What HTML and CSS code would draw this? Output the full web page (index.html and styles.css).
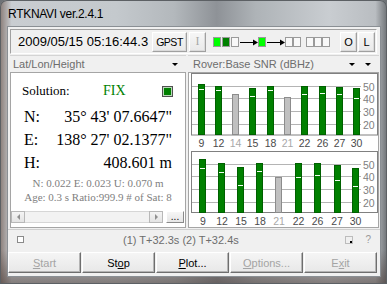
FILE: index.html
```html
<!DOCTYPE html>
<html lang="en">
<head>
    <meta charset="UTF-8">
    <title>RTKNAVI ver.2.4.1</title>
    <link rel="stylesheet" href="styles.css">
</head>
<body>

    <div class="window">
        <div class="titlebar">RTKNAVI ver.2.4.1</div>

        <div class="client">
            <!-- time and stream status -->
            <div class="topbar">
                <div class="time">2009/05/15 05:16:44.3</div>
                <button class="tbtn gpst">GPST</button>
                <button class="tbtn ibtn">I</button>
                <svg class="streams" width="118" height="12" viewBox="0 0 118 12">
                    <rect x="0.5" y="1.5" width="7" height="9" fill="#00ff00" stroke="#9a9a9a"/>
                    <rect x="9.5" y="1.5" width="7" height="9" fill="#008000" stroke="#9a9a9a"/>
                    <rect x="18.5" y="1.5" width="7" height="9" fill="#f8f8f8" stroke="#9a9a9a"/>
                    <line x1="27" y1="6.5" x2="41" y2="6.5" stroke="#000"/>
                    <polygon points="40,3.5 45,6.5 40,9.5" fill="#000"/>
                    <rect x="45.5" y="1.5" width="7" height="9" fill="#00ff00" stroke="#9a9a9a"/>
                    <line x1="54" y1="6.5" x2="68" y2="6.5" stroke="#000"/>
                    <polygon points="67,3.5 72,6.5 67,9.5" fill="#000"/>
                    <rect x="72.5" y="1.5" width="7" height="9" fill="#f8f8f8" stroke="#9a9a9a"/>
                    <rect x="80.5" y="1.5" width="7" height="9" fill="#f8f8f8" stroke="#9a9a9a"/>
                    <rect x="93.5" y="1.5" width="7" height="9" fill="#f8f8f8" stroke="#9a9a9a"/>
                    <rect x="101.5" y="1.5" width="7" height="9" fill="#f8f8f8" stroke="#9a9a9a"/>
                    <rect x="109.5" y="1.5" width="7" height="9" fill="#f8f8f8" stroke="#9a9a9a"/>
                </svg>
                <button class="tbtn obtn">O</button>
                <button class="tbtn lbtn">L</button>
            </div>

            <div class="main">
                <!-- solution panel -->
                <div class="pane pane-left">
                    <div class="pane-head">
                        <span>Lat/Lon/Height</span>
                        <span class="drop"></span>
                    </div>
                    <div class="box sol-box">
                        <div class="sol-row">
                            <span class="sol-label">Solution:</span>
                            <span class="sol-fix">FIX</span>
                            <span class="sol-led"></span>
                        </div>
                        <div class="pos-row"><span>N:</span><span>35° 43' 07.6647"</span></div>
                        <div class="pos-row"><span>E:</span><span>138° 27' 02.1377"</span></div>
                        <div class="pos-row"><span>H:</span><span>408.601 m</span></div>
                        <div class="sub-line">N: 0.022 E: 0.023 U: 0.070 m</div>
                        <div class="sub-line">Age: 0.3 s Ratio:999.9 # of Sat: 8</div>
                        <div class="scroll-row">
                            <div class="scrollbar">
                                <span class="sb-btn"><span class="tri-left"></span></span>
                                <span class="sb-track"></span>
                                <span class="sb-btn"><span class="tri-right"></span></span>
                            </div>
                            <button class="more-btn">...</button>
                        </div>
                    </div>
                </div>

                <!-- snr panel -->
                <div class="pane pane-right">
                    <div class="pane-head">
                        <span>Rover:Base SNR (dBHz)</span>
                        <span class="drop"></span>
                        <span class="drop drop-last"></span>
                    </div>
                    <div class="box snr-box">
                        <svg class="snr" width="189" height="154" viewBox="189 73 189 154">
                            <!-- rover -->
                            <rect x="191.5" y="73.5" width="186" height="61.5" fill="#fff" stroke="#808080"/>
                            <g stroke="#b4b4b4">
                                <line x1="192" y1="86.5" x2="361" y2="86.5"/>
                                <line x1="192" y1="98.5" x2="361" y2="98.5"/>
                                <line x1="192" y1="111.5" x2="361" y2="111.5"/>
                                <line x1="192" y1="124.5" x2="361" y2="124.5"/>
                            </g>
                            <g class="axis">
                                <text x="363" y="90.5">50</text>
                                <text x="363" y="102.5">40</text>
                                <text x="363" y="115.5">30</text>
                                <text x="363" y="128.5">20</text>
                            </g>
                            <g fill="#008000" stroke="#006000">
                                <rect x="198.5" y="84.5" width="6" height="50"/>
                                <rect x="215.5" y="86.5" width="6" height="48"/>
                                <rect x="249.5" y="88.5" width="6" height="46"/>
                                <rect x="267.5" y="86.5" width="6" height="48"/>
                                <rect x="301.5" y="86.5" width="6" height="48"/>
                                <rect x="319.5" y="86.5" width="6" height="48"/>
                                <rect x="336.5" y="87.5" width="6" height="47"/>
                                <rect x="353.5" y="88.5" width="6" height="46"/>
                            </g>
                            <g fill="#c0c0c0" stroke="#8c8c8c">
                                <rect x="232.5" y="94.5" width="6" height="40"/>
                                <rect x="284.5" y="97.5" width="6" height="37"/>
                            </g>
                            <g stroke="#f4fff4">
                                <line x1="199" y1="89.5" x2="204" y2="89.5"/>
                                <line x1="216" y1="90.5" x2="221" y2="90.5"/>
                                <line x1="250" y1="96.5" x2="255" y2="96.5"/>
                                <line x1="268" y1="90.5" x2="273" y2="90.5"/>
                                <line x1="302" y1="94.5" x2="307" y2="94.5"/>
                                <line x1="320" y1="93.5" x2="325" y2="93.5"/>
                                <line x1="337" y1="94.5" x2="342" y2="94.5"/>
                                <line x1="354" y1="98.5" x2="359" y2="98.5"/>
                            </g>
                            <g class="prn">
                                <text x="201.5" y="146.5">9</text>
                                <text x="218.5" y="146.5">12</text>
                                <text x="235.5" y="146.5" class="off">14</text>
                                <text x="252.5" y="146.5">15</text>
                                <text x="270.5" y="146.5">18</text>
                                <text x="287.5" y="146.5" class="off">21</text>
                                <text x="304.5" y="146.5">22</text>
                                <text x="322.5" y="146.5">26</text>
                                <text x="339.5" y="146.5">27</text>
                                <text x="356.5" y="146.5">30</text>
                            </g>

                            <!-- base -->
                            <rect x="191.5" y="151.5" width="186" height="61" fill="#fff" stroke="#808080"/>
                            <g stroke="#b4b4b4">
                                <line x1="192" y1="164.5" x2="361" y2="164.5"/>
                                <line x1="192" y1="176.5" x2="361" y2="176.5"/>
                                <line x1="192" y1="189.5" x2="361" y2="189.5"/>
                                <line x1="192" y1="202.5" x2="361" y2="202.5"/>
                            </g>
                            <g class="axis">
                                <text x="363" y="168.5">50</text>
                                <text x="363" y="180.5">40</text>
                                <text x="363" y="193.5">30</text>
                                <text x="363" y="206.5">20</text>
                            </g>
                            <g fill="#008000" stroke="#006000">
                                <rect x="199.5" y="159.5" width="6" height="53"/>
                                <rect x="218.5" y="163.5" width="6" height="49"/>
                                <rect x="237.5" y="167.5" width="6" height="45"/>
                                <rect x="256.5" y="163.5" width="6" height="49"/>
                                <rect x="295.5" y="163.5" width="6" height="49"/>
                                <rect x="314.5" y="163.5" width="6" height="49"/>
                                <rect x="334.5" y="165.5" width="6" height="47"/>
                                <rect x="352.5" y="168.5" width="6" height="44"/>
                            </g>
                            <g fill="#c0c0c0" stroke="#8c8c8c">
                                <rect x="275.5" y="177.5" width="6" height="35"/>
                            </g>
                            <g stroke="#f4fff4">
                                <line x1="200" y1="168.5" x2="205" y2="168.5"/>
                                <line x1="219" y1="172.5" x2="224" y2="172.5"/>
                                <line x1="238" y1="185.5" x2="243" y2="185.5"/>
                                <line x1="257" y1="171.5" x2="262" y2="171.5"/>
                                <line x1="296" y1="177.5" x2="301" y2="177.5"/>
                                <line x1="315" y1="175.5" x2="320" y2="175.5"/>
                                <line x1="335" y1="180.5" x2="340" y2="180.5"/>
                                <line x1="353" y1="186.5" x2="358" y2="186.5"/>
                            </g>
                            <g class="prn">
                                <text x="203" y="224.5">9</text>
                                <text x="222" y="224.5">12</text>
                                <text x="241" y="224.5">15</text>
                                <text x="260" y="224.5">18</text>
                                <text x="279" y="224.5" class="off">21</text>
                                <text x="298.5" y="224.5">22</text>
                                <text x="317.5" y="224.5">26</text>
                                <text x="337" y="224.5">27</text>
                                <text x="355.5" y="224.5">30</text>
                            </g>
                        </svg>
                    </div>
                </div>
            </div>

            <div class="status">
                <span class="check"></span>
                <span class="status-text">(1) T+32.3s (2) T+32.4s</span>
                <svg class="grip" width="8" height="8" viewBox="0 0 8 8">
                    <rect x="0.5" y="0.5" width="7" height="7" fill="none" stroke="#888" stroke-dasharray="1 1"/>
                    <rect x="5" y="5" width="2" height="2" fill="#000"/>
                </svg>
                <span class="help">?</span>
            </div>

            <div class="buttons">
                <button class="btn off"><u>S</u>tart</button>
                <button class="btn">St<u>o</u>p</button>
                <button class="btn"><u>P</u>lot...</button>
                <button class="btn off"><u>O</u>ptions...</button>
                <button class="btn off">E<u>x</u>it</button>
            </div>
        </div>
    </div>

</body>
</html>
```

FILE: styles.css
```css
* {
    box-sizing: border-box;
}
body {
    margin: 0;
    font-family: "Liberation Sans", Arial, sans-serif;
    background: #6e7276;
}
.window {
    width: 387px;
    height: 284px;
    display: flex;
    flex-direction: column;
    border-radius: 7px 7px 0 0;
    overflow: hidden;
    background:
        linear-gradient(to bottom, rgba(0, 0, 0, 0) 88%, rgba(70, 55, 50, 0.55) 100%),
        linear-gradient(to right, #8a7d78 0, #c9cdd1 3%, #c4c9cd 30%, #b3b8bc 45%, #8e9297 56%, #aeb3b7 66%, #c9cdd1 85%, #b9bdc1 97%, #6f7377 100%);
    box-shadow: inset 0 0 0 1px #5c6064;
}
.titlebar {
    height: 27px;
    padding: 7px 0 0 8px;
    font-size: 12px;
    line-height: 14px;
    letter-spacing: -0.3px;
    color: #000;
}
.client {
    margin: 0 7px 0 8px;
    height: 249px;
    background: #f0f0f0;
    display: flex;
    flex-direction: column;
    box-shadow: 0 0 0 1px #8a8f94;
}

/* top bar */
.topbar {
    margin: 2px 3px 0 2px;
    height: 25px;
    display: flex;
    align-items: center;
    border: 1px solid;
    border-color: #a0a0a0 #fff #fff #a0a0a0;
}
.time {
    width: 141px;
    padding-left: 7px;
    font-size: 13px;
    color: #000;
}
.tbtn {
    height: 20px;
    padding: 0;
    font-family: "Liberation Sans", Arial, sans-serif;
    font-size: 11px;
    color: #000;
    background: linear-gradient(#f6f6f6, #e9e9e9);
    border: 1px solid;
    border-color: #fff #a0a0a0 #a0a0a0 #fff;
    box-shadow: inset -1px -1px 0 #dadada;
}
.gpst {
    width: 35px;
    font-size: 10.5px;
    letter-spacing: -0.5px;
}
.ibtn {
    width: 17px;
    margin-left: 2px;
    font-family: "Liberation Serif", serif;
    font-size: 12px;
    color: #a8a8a8;
}
.streams {
    margin-left: 7px;
    display: block;
}
.obtn {
    width: 17px;
    margin-left: 9px;
}
.lbtn {
    width: 17px;
    margin-left: 1px;
}

/* panels */
.main {
    margin-top: 1px;
    height: 174px;
    display: flex;
}
.pane {
    display: flex;
    flex-direction: column;
}
.pane-left {
    width: 176px;
    margin-left: 2px;
}
.pane-right {
    width: 191px;
    margin-left: 2px;
}
.pane-head {
    height: 17px;
    display: flex;
    align-items: center;
    padding-left: 3px;
    font-size: 11px;
    color: #6d6d6d;
    border-top: 1px solid #d4d4d4;
}
.pane-right .pane-head {
    padding-left: 5px;
}
.drop {
    margin-left: auto;
    margin-right: 8px;
    width: 0;
    height: 0;
    border-left: 3px solid transparent;
    border-right: 3px solid transparent;
    border-top: 3px solid #000;
}
.pane-right .drop {
    margin-right: 0;
}
.pane-right .drop-last {
    margin-left: 10px;
    margin-right: 8px;
}
.box {
    height: 156px;
    background: #fff;
    border: 1px solid #a5a5a5;
}

/* solution box */
.sol-box {
    display: flex;
    flex-direction: column;
    font-family: "Liberation Serif", "Times New Roman", serif;
}
.sol-row {
    margin-top: 9px;
    height: 18px;
    display: flex;
    align-items: center;
    padding: 0 12px 0 11px;
}
.sol-label {
    width: 81px;
    font-size: 13px;
}
.sol-fix {
    font-size: 14px;
    color: #008000;
}
.sol-led {
    margin-left: auto;
    width: 11px;
    height: 11px;
    background: #008000;
    border: 1px solid #505050;
    box-shadow: inset 0 0 0 1px #b8d8b8;
}
.pos-row {
    height: 23px;
    display: flex;
    align-items: center;
    justify-content: space-between;
    padding: 0 13px 0 13px;
    font-size: 16px;
    color: #000;
}
.sol-row + .pos-row {
    margin-top: 5px;
}
.sub-line {
    height: 14px;
    line-height: 14px;
    text-align: center;
    font-size: 11px;
    color: #808080;
}
.pos-row + .sub-line {
    margin-top: 2px;
}
.scroll-row {
    margin-top: 7px;
    height: 12px;
    display: flex;
}
.scrollbar {
    width: 152px;
    display: flex;
    background: #f2f2f2;
    border: 1px solid #d6d6d6;
}
.sb-btn {
    width: 14px;
    display: flex;
    align-items: center;
    justify-content: center;
    background: linear-gradient(#f4f4f4, #e4e4e4);
    border: 1px solid #b8b8b8;
    margin: -1px;
}
.sb-track {
    flex: 1;
}
.tri-left {
    border-top: 3px solid transparent;
    border-bottom: 3px solid transparent;
    border-right: 3px solid #909090;
}
.tri-right {
    border-top: 3px solid transparent;
    border-bottom: 3px solid transparent;
    border-left: 3px solid #909090;
}
.more-btn {
    margin-left: 3px;
    width: 18px;
    height: 12px;
    padding: 0;
    font-family: "Liberation Sans", Arial, sans-serif;
    font-size: 10px;
    line-height: 6px;
    color: #000;
    background: linear-gradient(#f6f6f6, #e6e6e6);
    border: 1px solid;
    border-color: #fff #8a8a8a #8a8a8a #fff;
}

/* snr charts */
.snr {
    display: block;
}
.axis text {
    font-family: "Liberation Sans", Arial, sans-serif;
    font-size: 10.5px;
    fill: #808080;
}
.prn text {
    font-family: "Liberation Sans", Arial, sans-serif;
    font-size: 10.5px;
    fill: #4a4a4a;
    text-anchor: middle;
}
.prn text.off {
    fill: #a8a8a8;
}

/* status bar */
.status {
    height: 20px;
    display: flex;
    align-items: center;
    border-top: 1px solid #cfcfcf;
    font-size: 11px;
    color: #6d6d6d;
}
.check {
    margin-left: 9px;
    width: 7px;
    height: 7px;
    border: 1px solid #8a8a8a;
    background: #fff;
}
.status-text {
    margin-left: 99px;
}
.grip {
    margin-left: auto;
    display: block;
}
.help {
    margin-left: 12px;
    margin-right: 9px;
    font-size: 10px;
    color: #9a9a9a;
}

/* bottom buttons */
.buttons {
    margin-top: 3px;
    display: flex;
    gap: 1px;
}
.btn {
    width: 73px;
    height: 21px;
    padding: 0;
    font-family: "Liberation Sans", Arial, sans-serif;
    font-size: 11px;
    color: #000;
    background: linear-gradient(#f5f5f5, #e8e8e8);
    border: 1px solid;
    border-color: #fff #6e6e6e #6e6e6e #fff;
    box-shadow: inset -1px -1px 0 #b4b4b4;
}
.btn.off {
    color: #a4a4a4;
}
```
